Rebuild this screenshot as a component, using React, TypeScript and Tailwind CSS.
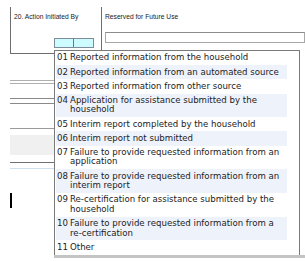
const items = [
  { code: "01", lines: ["Reported information from the household"] },
  { code: "02", lines: ["Reported information from an automated source"] },
  { code: "03", lines: ["Reported information from other source"] },
  { code: "04", lines: ["Application for assistance submitted by the", "household"] },
  { code: "05", lines: ["Interim report completed by the household"] },
  { code: "06", lines: ["Interim report not submitted"] },
  { code: "07", lines: ["Failure to provide requested information from an", "application"] },
  { code: "08", lines: ["Failure to provide requested information from an", "interim report"] },
  { code: "09", lines: ["Re-certification for assistance submitted by the", "household"] },
  { code: "10", lines: ["Failure to provide requested information from a", "re-certification"] },
  { code: "11", lines: ["Other"] },
];

const CodeList = () => {
  return (
    <div className="absolute left-[54px] top-[50px] w-[246px] border border-b-0 border-[#7a7a7a] bg-white pl-[1px]">
      {items.map((item, i) => (
        <div
          key={item.code}
          className={
            "flex w-[231px] py-[2.35px] leading-[9.5px] " +
            (i % 2 === 1 ? "bg-[#eef2fa]" : "bg-white")
          }
        >
          <div className="w-[14px] shrink-0 pl-[1px]">{item.code}</div>
          <div>
            {item.lines.map((l) => (
              <div key={l} className="whitespace-nowrap">
                {l}
              </div>
            ))}
          </div>
        </div>
      ))}
      <div className="-ml-[2px] -mr-[7px] h-[3px] bg-[#c4c4c4]"></div>
    </div>
  );
};

export default function App() {
  return (
    <div
      className="relative h-[261px] w-[305px] overflow-hidden bg-white text-[8.6px] text-[#1c1c1c]"
      style={{ fontFamily: '"DejaVu Sans", Verdana, sans-serif' }}
    >
      {/* form row 20 */}
      <div className="flex pt-[7px]" style={{ fontFamily: '"Liberation Sans", Arial, sans-serif' }}>
        <div className="ml-[10px] flex h-[47px] w-[129px] flex-col border-b border-l border-[#6e6e6e]">
          <div className="pl-[3px] pt-[6px] text-[6.7px] leading-[8px] text-[#222]">20. Action Initiated By</div>
          <div className="ml-[43px] mt-[17px] flex h-[10px] w-[40px] border border-[#7f8c99] bg-[#ccfcff]">
            <div className="w-[19px] border-r border-[#6d7b88]"></div>
            <div className="grow"></div>
          </div>
        </div>
        <div className="flex h-[60px] grow flex-col border-l border-[#6e6e6e]">
          <div className="pl-[3px] pt-[6px] text-[6.7px] leading-[8px] text-[#222]">Reserved for Future Use</div>
          <div className="ml-[3px] mt-[11px] h-[11px] w-[200px] shrink-0 border border-[#a8a8a8] border-t-[#8c8c8c]"></div>
        </div>
      </div>

      {/* rows behind the list */}
      <div className="ml-[10px] w-[129px] -mt-[13px]">
        <div className="mt-[26px] h-[1px] bg-[#b0b0b0]"></div>
        <div className="mt-[2px] h-[1px] bg-[#b0b0b0]"></div>
        <div className="mt-[14px] h-[1px] bg-[#8a8a8a]"></div>
        <div className="mt-[4px] h-[1px] bg-[#8a8a8a]"></div>
        <div className="mt-[24px] h-[1px] bg-[#9a9a9a]"></div>
        <div className="mt-[6px] h-[20px] bg-[#f0f0f0]"></div>
        <div className="mt-[7px] h-[1px] bg-[#707070]"></div>
        <div className="mt-[5px] h-[1px] bg-[#cfe0f0]"></div>
        <div className="mt-[24px] h-[15px] w-[2px] bg-black"></div>
      </div>

      <CodeList />
    </div>
  );
}
